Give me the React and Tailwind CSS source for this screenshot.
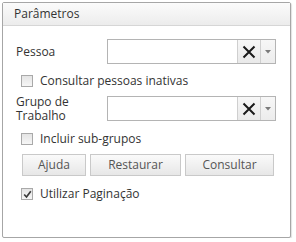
function ClearIcon() {
  return (
    <svg width="14" height="14" viewBox="0 0 14 14">
      <path d="M1.5 1.5 L12.5 12.5 M12.5 1.5 L1.5 12.5" stroke="#1a1a1a" strokeWidth="2" fill="none" />
    </svg>
  )
}

function Combo() {
  return (
    <div className="flex w-[169px] h-[25px] border border-[#b4b4b4] bg-white">
      <div className="flex-1"></div>
      <div className="w-[23px] flex items-center justify-center border-l border-[#cfcfcf] bg-gradient-to-b from-[#f7f7f7] to-[#e9e9e9]">
        <ClearIcon />
      </div>
      <div className="w-[15px] flex items-center justify-center border-l border-[#cfcfcf] bg-gradient-to-b from-[#f7f7f7] to-[#ececec]">
        <svg width="6" height="4" viewBox="0 0 6 4">
          <path d="M0 0 L6 0 L3 3.5 Z" fill="#7a7a7a" />
        </svg>
      </div>
    </div>
  )
}

function Check({ checked, label }) {
  return (
    <div className="flex items-center h-[16px] pl-[5px]">
      <div className="w-[12px] h-[12px] border border-[#a9a9a9] bg-gradient-to-b from-[#e4e4e4] to-[#f6f6f6] flex items-center justify-center">
        {checked && (
          <svg width="9" height="9" viewBox="0 0 9 9">
            <path d="M1.2 4.5 L3.5 7 L7.8 1.3" stroke="#3a3a3a" strokeWidth="1.7" fill="none" />
          </svg>
        )}
      </div>
      <span className="ml-[7px] text-[#333]">{label}</span>
    </div>
  )
}

function Button({ w, children }) {
  return (
    <div className={"h-[22px] flex items-center justify-center border border-[#c9c9c9] bg-gradient-to-b from-[#fafafa] to-[#e7e7e7] text-[#555] " + w}>
      {children}
    </div>
  )
}

export default function App() {
  return (
    <div className="pt-[2px] pl-[2px] bg-white" style={{ fontFamily: '"Open Sans", sans-serif' }}>
      <div className="w-[289px] h-[236px] border border-[#a6a6a6] rounded-[2px] bg-white shadow-[1px_1px_1px_rgba(0,0,0,0.12)] text-[12px] leading-[16px]">
        <div className="h-[23px] flex items-center pl-[11px] border-b border-[#d6d6d6] bg-gradient-to-b from-[#fbfbfb] to-[#ececec] text-[12px] text-[#333]">
          Parâmetros
        </div>
        <div className="px-[13px]">
          <div className="mt-[13px] flex items-center">
            <div className="w-[91px] text-[#333]">Pessoa</div>
            <Combo />
          </div>
          <div className="mt-[9px]">
            <Check label="Consultar pessoas inativas" />
          </div>
          <div className="mt-[7px] flex items-center h-[25px]">
            <div className="w-[91px] h-[25px] flex flex-col justify-center text-[#333] leading-[14px]">
              <span>Grupo de</span>
              <span>Trabalho</span>
            </div>
            <Combo />
          </div>
          <div className="mt-[10px]">
            <Check label="Incluir sub-grupos" />
          </div>
          <div className="mt-[7px] flex pl-[6px] gap-[4px]">
            <Button w="w-[64px]">Ajuda</Button>
            <Button w="w-[91px]">Restaurar</Button>
            <Button w="w-[89px]">Consultar</Button>
          </div>
          <div className="mt-[10px]">
            <Check checked label="Utilizar Paginação" />
          </div>
        </div>
      </div>
    </div>
  )
}
